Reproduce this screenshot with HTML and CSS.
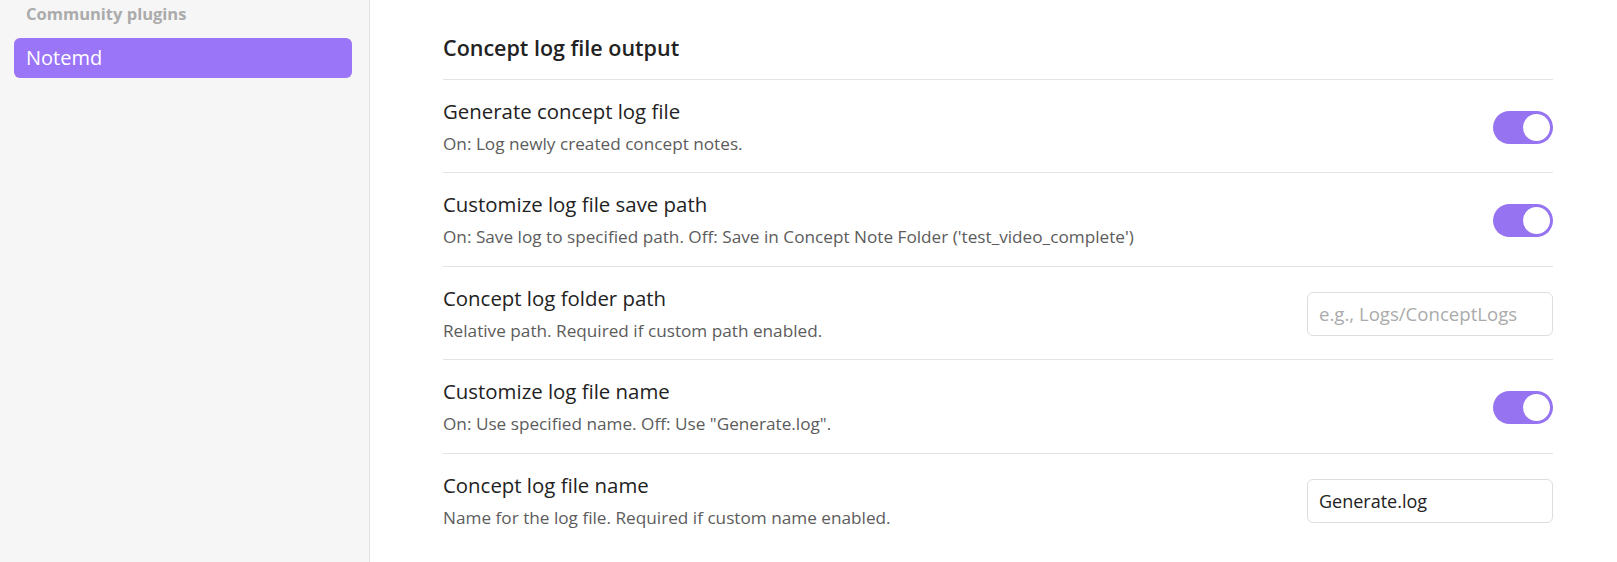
FILE: index.html
```html
<!DOCTYPE html>
<html>
<head>
<meta charset="utf-8">
<link rel="stylesheet" href="styles.css">
</head>
<body>
<div class="app">
  <aside class="sidebar">
    <div class="nav-header">Community plugins</div>
    <div class="nav-item active">Notemd</div>
  </aside>
  <main class="content">
    <div class="setting heading">
      <div class="name">Concept log file output</div>
    </div>
    <div class="setting">
      <div class="info">
        <div class="name">Generate concept log file</div>
        <div class="desc">On: Log newly created concept notes.</div>
      </div>
      <div class="toggle on"><span class="knob"></span></div>
    </div>
    <div class="setting">
      <div class="info">
        <div class="name">Customize log file save path</div>
        <div class="desc">On: Save log to specified path. Off: Save in Concept Note Folder ('test_video_complete')</div>
      </div>
      <div class="toggle on"><span class="knob"></span></div>
    </div>
    <div class="setting">
      <div class="info">
        <div class="name">Concept log folder path</div>
        <div class="desc">Relative path. Required if custom path enabled.</div>
      </div>
      <input class="text-input" type="text" placeholder="e.g., Logs/ConceptLogs">
    </div>
    <div class="setting">
      <div class="info">
        <div class="name">Customize log file name</div>
        <div class="desc">On: Use specified name. Off: Use "Generate.log".</div>
      </div>
      <div class="toggle on"><span class="knob"></span></div>
    </div>
    <div class="setting last">
      <div class="info">
        <div class="name">Concept log file name</div>
        <div class="desc">Name for the log file. Required if custom name enabled.</div>
      </div>
      <input class="text-input" type="text" value="Generate.log">
    </div>
  </main>
</div>
</body>
</html>
```

FILE: styles.css
```css
* { box-sizing: border-box; }
html, body { margin: 0; padding: 0; background: #ffffff; }
body {
  font-family: "Open Sans", "Noto Sans", sans-serif;
  color: #222222;
  width: 1617px;
  height: 562px;
  overflow: hidden;
}
.app {
  display: flex;
  height: 562px;
}
.sidebar {
  width: 370px;
  flex: none;
  background: #f6f6f6;
  border-right: 1px solid #e3e3e3;
  padding: 2px 17px 0 14px;
}
.nav-header {
  font-size: 16.5px;
  font-weight: 700;
  color: #ababab;
  line-height: 24px;
  padding-left: 12px;
  margin-bottom: 12px;
}
.nav-item {
  height: 40px;
  line-height: 40px;
  font-size: 20px;
  padding-left: 12px;
  border-radius: 6px;
}
.nav-item.active {
  background: #9b75f7;
  color: #ffffff;
}
.content {
  flex: 1;
  padding: 0 64px 0 73px;
}
.setting {
  display: flex;
  align-items: center;
  justify-content: space-between;
  border-bottom: 1px solid #e3e3e3;
  padding: 15px 0 13.4px;
}
.setting.last { border-bottom: none; }
.setting.heading {
  padding: 33px 0 15px;
}
.setting.heading .name {
  font-size: 21.5px;
  font-weight: 600;
  line-height: 30px;
}
.info { display: flex; flex-direction: column; }
.name {
  font-size: 20.4px;
  line-height: 33px;
  color: #222222;
  margin-bottom: 1px;
}
.desc {
  font-size: 17.2px;
  line-height: 30px;
  color: #5c5c5c;
}
.toggle {
  width: 60px;
  height: 33px;
  border-radius: 17px;
  background: #9673f1;
  position: relative;
  flex: none;
}
.toggle .knob {
  position: absolute;
  top: 3px;
  right: 3px;
  width: 27px;
  height: 27px;
  border-radius: 50%;
  background: #ffffff;
}
.text-input {
  width: 246px;
  height: 44px;
  border: 1px solid #dedede;
  border-radius: 6px;
  padding: 0 11px;
  font-family: "Open Sans", "Noto Sans", sans-serif;
  font-size: 18px;
  color: #222222;
  background: #ffffff;
  outline: none;
}
.text-input::placeholder { color: #ababab; font-size: 18.6px; }
```
